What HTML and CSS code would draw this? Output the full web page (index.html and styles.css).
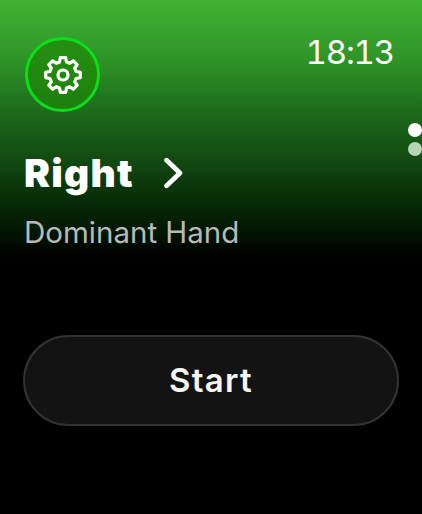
FILE: index.html
```html
<!DOCTYPE html>
<html lang="en">
<head>
<meta charset="utf-8">
<title>Dominant Hand</title>
<link rel="stylesheet" href="styles.css">
</head>
<body>
<main class="screen">
  <header class="top">
    <button class="settings" aria-label="Settings">
      <svg class="gear" viewBox="-20 -20 40 40" aria-hidden="true">
        <path d="M-3.49 -13.04L-2.74 -17.28L2.74 -17.28L3.49 -13.04L6.75 -11.69L10.29 -14.16L14.16 -10.29L11.69 -6.75L13.04 -3.49L17.28 -2.74L17.28 2.74L13.04 3.49L11.69 6.75L14.16 10.29L10.29 14.16L6.75 11.69L3.49 13.04L2.74 17.28L-2.74 17.28L-3.49 13.04L-6.75 11.69L-10.29 14.16L-14.16 10.29L-11.69 6.75L-13.04 3.49L-17.28 2.74L-17.28 -2.74L-13.04 -3.49L-11.69 -6.75L-14.16 -10.29L-10.29 -14.16L-6.75 -11.69Z"/>
        <circle cx="0" cy="0" r="5"/>
      </svg>
    </button>
    <div class="time">18:13</div>
  </header>
  <section class="hand">
    <div class="hand-row">
      <span class="hand-value">Right</span>
      <svg class="chevron" viewBox="0 0 20 30" aria-hidden="true"><path d="M4 3L16.5 15L4 27"/></svg>
    </div>
    <div class="hand-label">Dominant Hand</div>
  </section>
  <button class="start">Start</button>
  <div class="pager" aria-hidden="true"><span class="dot"></span><span class="dot dim"></span></div>
</main>
</body>
</html>
```

FILE: styles.css
```css
* { box-sizing: border-box; }
html, body { margin: 0; height: 100%; background: #000; }
.screen {
  position: relative;
  width: 422px;
  height: 514px;
  overflow: hidden;
  padding: 37px 23px 0;
  display: flex;
  flex-direction: column;
  font-family: Inter, "Liberation Sans", sans-serif;
  color: #fff;
  background: linear-gradient(180deg, #40b234 0%, #2e9327 12%, #1d6a1b 22%, #124a12 31%, #083008 38%, #021703 45%, #000 50%);
}
.top {
  display: flex;
  justify-content: space-between;
  align-items: flex-start;
  padding-left: 2px;
  padding-right: 5px;
}
.settings {
  width: 75px;
  height: 75px;
  padding: 0;
  border-radius: 50%;
  border: 3px solid #0adf18;
  background: rgba(30, 135, 5, 0.65);
  display: flex;
  align-items: center;
  justify-content: center;
}
.gear { width: 40px; height: 40px; display: block; }
.gear path, .gear circle {
  fill: none;
  stroke: #fff;
  stroke-width: 3.2;
  stroke-linejoin: round;
}
.time {
  font-size: 33px;
  line-height: 32px;
  margin-top: -1px;
  font-weight: 400;
  font-variant-numeric: tabular-nums;
  letter-spacing: -1.2px;
}
.hand { margin-top: 36px; padding-left: 1px; }
.hand-row { display: flex; align-items: center; gap: 28px; }
.hand-value { font-size: 39px; line-height: 50px; font-weight: 900; letter-spacing: 1.2px; }
.chevron { width: 22px; height: 32px; display: block; }
.chevron path {
  fill: none;
  stroke: #fff;
  stroke-width: 4.4;
  stroke-linecap: round;
  stroke-linejoin: round;
}
.hand-label {
  font-size: 29.5px;
  line-height: 36px;
  margin-top: 16px;
  color: #b9b9b9;
}
.start {
  margin-top: 85px;
  width: 376px;
  height: 91px;
  border-radius: 46px;
  border: 2px solid #333;
  background: #131313;
  color: #f5f5f5;
  font: 600 33px/1 Inter, "Liberation Sans", sans-serif;
  letter-spacing: 1.3px;
}
.pager {
  position: absolute;
  left: 408px;
  top: 123px;
  display: flex;
  flex-direction: column;
  gap: 5px;
}
.dot { width: 14px; height: 14px; border-radius: 50%; background: #fff; display: block; }
.dot.dim { background: #b7d6b4; }
```
